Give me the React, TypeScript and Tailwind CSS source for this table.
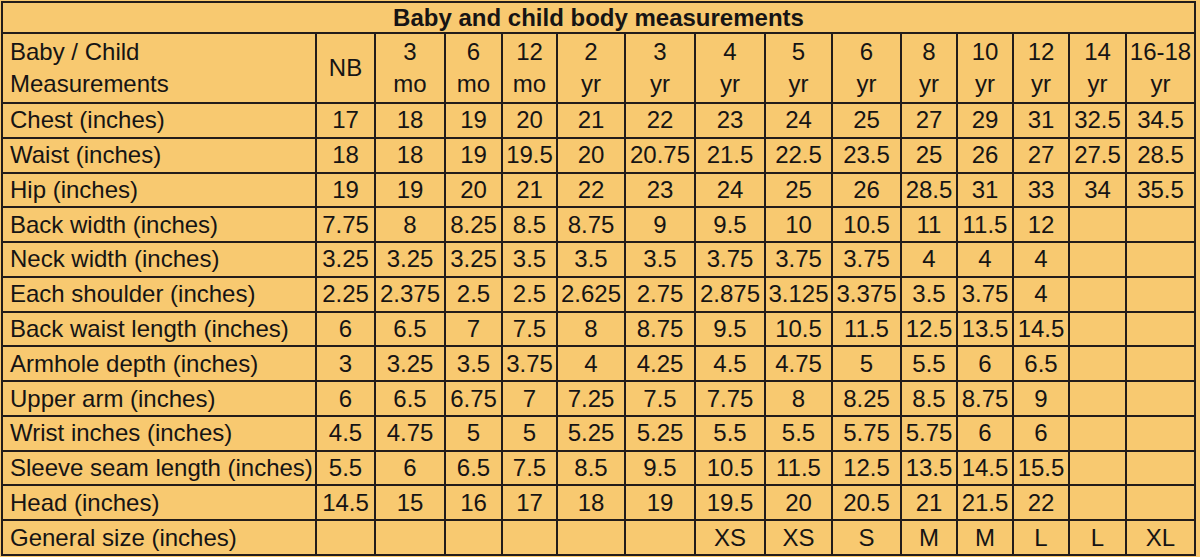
const sizes: string[][] = [
  ['NB', ''],
  ['3', 'mo'],
  ['6', 'mo'],
  ['12', 'mo'],
  ['2', 'yr'],
  ['3', 'yr'],
  ['4', 'yr'],
  ['5', 'yr'],
  ['6', 'yr'],
  ['8', 'yr'],
  ['10', 'yr'],
  ['12', 'yr'],
  ['14', 'yr'],
  ['16-18', 'yr'],
]

const rows: [string, string[]][] = [
  ['Chest (inches)', ['17', '18', '19', '20', '21', '22', '23', '24', '25', '27', '29', '31', '32.5', '34.5']],
  ['Waist (inches)', ['18', '18', '19', '19.5', '20', '20.75', '21.5', '22.5', '23.5', '25', '26', '27', '27.5', '28.5']],
  ['Hip (inches)', ['19', '19', '20', '21', '22', '23', '24', '25', '26', '28.5', '31', '33', '34', '35.5']],
  ['Back width (inches)', ['7.75', '8', '8.25', '8.5', '8.75', '9', '9.5', '10', '10.5', '11', '11.5', '12', '', '']],
  ['Neck width (inches)', ['3.25', '3.25', '3.25', '3.5', '3.5', '3.5', '3.75', '3.75', '3.75', '4', '4', '4', '', '']],
  ['Each shoulder (inches)', ['2.25', '2.375', '2.5', '2.5', '2.625', '2.75', '2.875', '3.125', '3.375', '3.5', '3.75', '4', '', '']],
  ['Back waist length (inches)', ['6', '6.5', '7', '7.5', '8', '8.75', '9.5', '10.5', '11.5', '12.5', '13.5', '14.5', '', '']],
  ['Armhole depth (inches)', ['3', '3.25', '3.5', '3.75', '4', '4.25', '4.5', '4.75', '5', '5.5', '6', '6.5', '', '']],
  ['Upper arm (inches)', ['6', '6.5', '6.75', '7', '7.25', '7.5', '7.75', '8', '8.25', '8.5', '8.75', '9', '', '']],
  ['Wrist inches (inches)', ['4.5', '4.75', '5', '5', '5.25', '5.25', '5.5', '5.5', '5.75', '5.75', '6', '6', '', '']],
  ['Sleeve seam length (inches)', ['5.5', '6', '6.5', '7.5', '8.5', '9.5', '10.5', '11.5', '12.5', '13.5', '14.5', '15.5', '', '']],
  ['Head (inches)', ['14.5', '15', '16', '17', '18', '19', '19.5', '20', '20.5', '21', '21.5', '22', '', '']],
  ['General size (inches)', ['', '', '', '', '', '', 'XS', 'XS', 'S', 'M', 'M', 'L', 'L', 'XL']],
]

export default function App() {
  return (
    <div
      className="w-[1200px] h-[557px] bg-[#f8c970] pt-px pl-px text-[#161414]"
      style={{ fontFamily: '"Liberation Sans", Arial, sans-serif' }}
    >
      <div className="grid w-[1195px] h-[555px] p-[2px] gap-[2px] bg-[#231c1a] grid-cols-[312px_57px_68px_55px_53px_66px_68px_68px_65px_67px_54px_54px_54px_55px_67px] grid-rows-[29px_68px_repeat(13,minmax(0,1fr))]">
        <div className="col-span-15 bg-[#f8c970] flex items-center justify-center text-[24px] font-bold leading-none">
          Baby and child body measurements
        </div>

        <div className="bg-[#f8c970] flex flex-col justify-center pl-[7px] text-[24px] leading-[32px]">
          <span>Baby / Child</span>
          <span>Measurements</span>
        </div>
        {sizes.map(([a, b], i) => (
          <div
            key={i}
            className="bg-[#f8c970] flex flex-col items-center justify-center text-[24px] leading-[32px] whitespace-nowrap"
          >
            <span>{a}</span>
            {b && <span>{b}</span>}
          </div>
        ))}

        {rows.map(([label, vals]) => (
          <div key={label} className="contents">
            <div className="bg-[#f8c970] flex items-center pl-[7px] text-[24px] leading-none whitespace-nowrap">
              {label}
            </div>
            {vals.map((v, j) => (
              <div
                key={j}
                className="bg-[#f8c970] flex items-center justify-center text-[24px] leading-none whitespace-nowrap"
              >
                {v}
              </div>
            ))}
          </div>
        ))}
      </div>
    </div>
  )
}
